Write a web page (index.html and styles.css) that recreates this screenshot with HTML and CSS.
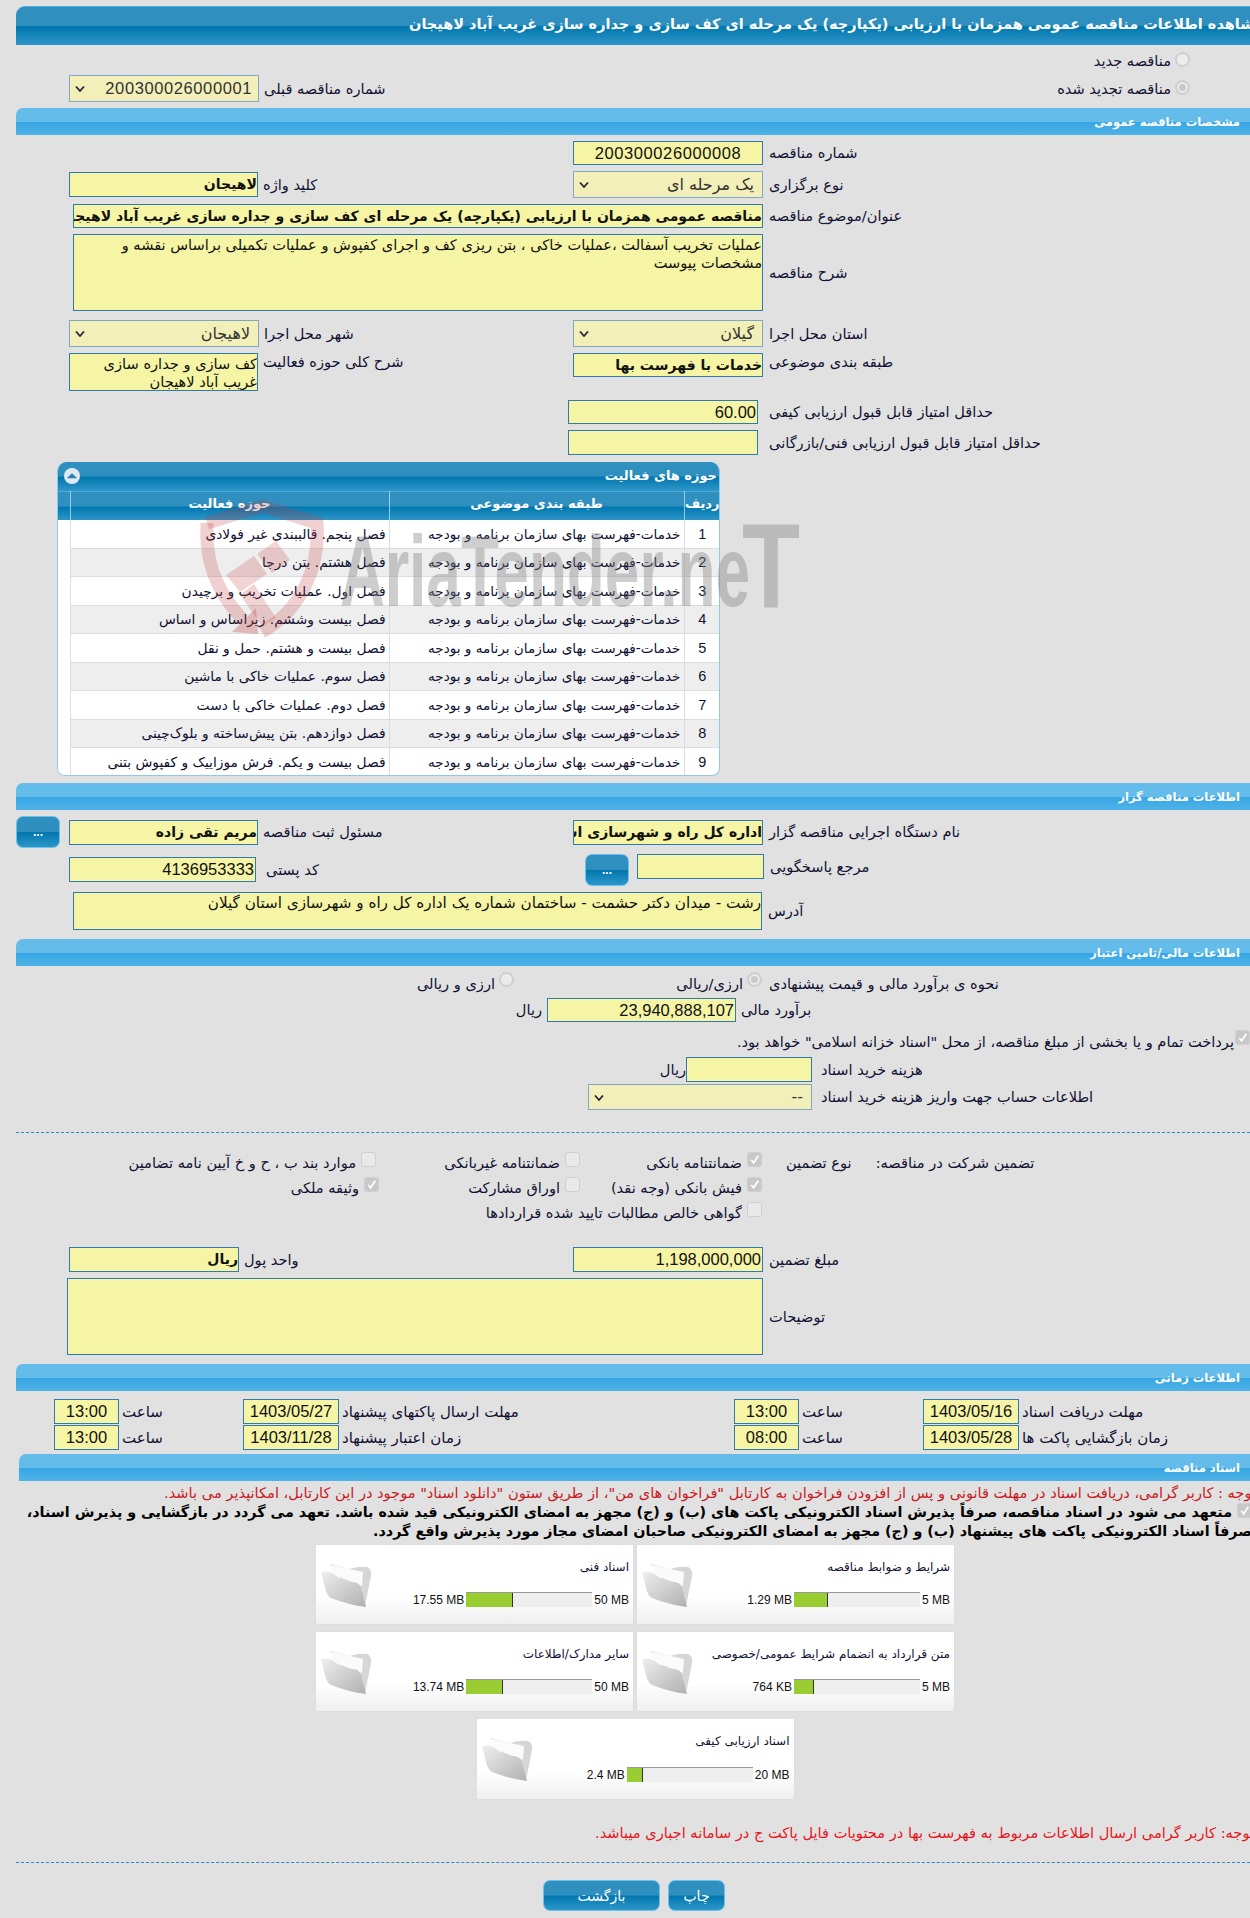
FILE: index.html
```
<!DOCTYPE html>
<html lang="fa">
<head>
<meta charset="utf-8">
<title>مشاهده اطلاعات مناقصه</title>
<link rel="stylesheet" href="styles.css">
</head>
<body>
<div class="page">
  <h1 class="title"><span>مشاهده اطلاعات مناقصه عمومی همزمان با ارزیابی (یکپارچه) یک مرحله ای کف سازی و جداره سازی غریب آباد لاهیجان</span></h1>

  <div class="flow-right r1"><span class="lab">مناقصه جدید</span><i class="radio"></i></div>
  <div class="row r2">
    <div class="f f5"><div class="sel w190 h27 long"><svg class="chev" viewBox="0 0 10 8"><path d="M1 1.500 5 6l4-4.500" fill="none" stroke="#223" stroke-width="1.800"/></svg>200300026000001</div><span class="lab">شماره مناقصه قبلی</span></div>
    <div class="flow-right rad2"><span class="lab">مناقصه تجدید شده</span><i class="radio on"></i></div>
  </div>

  <h2 class="sec g6">مشخصات مناقصه عمومی</h2>

  <div class="row g6"><div></div><div class="f"><div class="inp num w190 h24 ctr long">200300026000008</div><span class="lab">شماره مناقصه</span></div></div>
  <div class="row g6 h27">
    <div class="f f5"><div class="inp bold w189">لاهیجان</div><span class="lab">کلید واژه</span></div>
    <div class="f"><div class="sel w190 h27"><svg class="chev" viewBox="0 0 10 8"><path d="M1 1.500 5 6l4-4.500" fill="none" stroke="#223" stroke-width="1.800"/></svg>یک مرحله ای</div><span class="lab">نوع برگزاری</span></div>
  </div>
  <div class="wide g6"><div class="inp bold w690 h24">مناقصه عمومی همزمان با ارزیابی (یکپارچه) یک مرحله ای کف سازی و جداره سازی غریب آباد لاهیجان</div><span class="lab">عنوان/موضوع مناقصه</span></div>
  <div class="wide g6"><div class="area w690 h77">عملیات تخریب آسفالت ،عملیات خاکی ، بتن ریزی کف و اجرای کفپوش و عملیات تکمیلی براساس نقشه و مشخصات پیوست</div><span class="lab">شرح مناقصه</span></div>
  <div class="row g9 h27">
    <div class="f f5"><div class="sel w190 h27"><svg class="chev" viewBox="0 0 10 8"><path d="M1 1.500 5 6l4-4.500" fill="none" stroke="#223" stroke-width="1.800"/></svg>لاهیجان</div><span class="lab">شهر محل اجرا</span></div>
    <div class="f"><div class="sel w190 h27"><svg class="chev" viewBox="0 0 10 8"><path d="M1 1.500 5 6l4-4.500" fill="none" stroke="#223" stroke-width="1.800"/></svg>گیلان</div><span class="lab">استان محل اجرا</span></div>
  </div>
  <div class="row g6 top">
    <div class="f f5 ftop"><div class="area w189 h38">کف سازی و جداره سازی غریب آباد لاهیجان</div><span class="lab">شرح کلی حوزه فعالیت</span></div>
    <div class="f ftop"><div class="inp bold w190 h24">خدمات با فهرست بها</div><span class="lab">طبقه بندی موضوعی</span></div>
  </div>
  <div class="row g9"><div></div><div class="f f11 shift"><div class="inp num w190 h24">60.00</div><span class="lab">حداقل امتیاز قابل قبول ارزیابی کیفی</span></div></div>
  <div class="row g6"><div></div><div class="f f11 shift"><div class="inp w190 h25"></div><span class="lab">حداقل امتیاز قابل قبول ارزیابی فنی/بازرگانی</span></div></div>

  <div class="panel">
    <div class="panel-head"><i class="collapse"><svg viewBox="0 0 14 14"><path d="M2.500 9 7 4.500 11.500 9Z" fill="#2c7fb3"/></svg></i><span>حوزه های فعالیت</span></div>
    <table class="grid">
      <thead><tr><th class="c1">ردیف</th><th class="c2">طبقه بندی موضوعی</th><th class="c3">حوزه فعالیت</th><th class="c4"></th></tr></thead>
      <tbody>
        <tr><td class="n">1</td><td>خدمات-فهرست بهای سازمان برنامه و بودجه</td><td>فصل پنجم. قالببندی غیر فولادی</td><td></td></tr>
        <tr><td class="n">2</td><td>خدمات-فهرست بهای سازمان برنامه و بودجه</td><td>فصل هشتم. بتن درجا</td><td></td></tr>
        <tr><td class="n">3</td><td>خدمات-فهرست بهای سازمان برنامه و بودجه</td><td>فصل اول. عملیات تخریب و برچیدن</td><td></td></tr>
        <tr><td class="n">4</td><td>خدمات-فهرست بهای سازمان برنامه و بودجه</td><td>فصل بیست وششم. زیراساس و اساس</td><td></td></tr>
        <tr><td class="n">5</td><td>خدمات-فهرست بهای سازمان برنامه و بودجه</td><td>فصل بیست و هشتم. حمل و نقل</td><td></td></tr>
        <tr><td class="n">6</td><td>خدمات-فهرست بهای سازمان برنامه و بودجه</td><td>فصل سوم. عملیات خاکی با ماشین</td><td></td></tr>
        <tr><td class="n">7</td><td>خدمات-فهرست بهای سازمان برنامه و بودجه</td><td>فصل دوم. عملیات خاکی با دست</td><td></td></tr>
        <tr><td class="n">8</td><td>خدمات-فهرست بهای سازمان برنامه و بودجه</td><td>فصل دوازدهم. بتن پیش‌ساخته و بلوک‌چینی</td><td></td></tr>
        <tr><td class="n">9</td><td>خدمات-فهرست بهای سازمان برنامه و بودجه</td><td>فصل بیست و یکم. فرش موزاییک و کفپوش بتنی</td><td></td></tr>
      </tbody>
    </table>
  </div>

  <h2 class="sec g7">اطلاعات مناقصه گزار</h2>

  <div class="buy g6">
    <button class="btn-dots" type="button">...</button>
    <div class="row-inner">
      <div class="f f5"><div class="inp bold w189">مریم تقی زاده</div><span class="lab">مسئول ثبت مناقصه</span></div>
      <div class="f"><div class="inp bold w190">اداره کل راه و شهرسازی استان گیلان</div><span class="lab">نام دستگاه اجرایی مناقصه گزار</span></div>
    </div>
  </div>
  <div class="row g6 h32 ftop">
    <div class="f f10 pt3"><div class="inp num w187">4136953333</div><span class="lab">کد پستی</span></div>
    <div class="f ftop"><button class="btn-dots small" type="button">...</button><div class="inp w127"></div><span class="lab pt4">مرجع پاسخگویی</span></div>
  </div>
  <div class="wide g6"><div class="area addr w689 h38">رشت - میدان دکتر حشمت - ساختمان شماره یک اداره کل راه و شهرسازی استان گیلان</div><span class="lab">آدرس</span></div>

  <h2 class="sec g9">اطلاعات مالی/تامین اعتبار</h2>

  <div class="pay g6">
    <div class="pc"><span class="lab">ارزی و ریالی</span><i class="radio"></i></div>
    <div class="pc"><span class="lab">ارزی/ریالی</span><i class="radio on"></i></div>
    <span class="lab p7">نحوه ی برآورد مالی و قیمت پیشنهادی</span>
  </div>
  <div class="est g8"><span class="lab rial">ریال</span><div class="inp num w189 h24">23,940,888,107</div><span class="lab">برآورد مالی</span></div>
  <div class="flow-right notice g8"><span class="lab">پرداخت تمام و یا بخشی از مبلغ مناقصه، از محل "اسناد خزانه اسلامی" خواهد بود.</span><i class="check on"><svg viewBox="0 0 12 12"><path d="M3 6.500 5.200 9 9.500 2.500" fill="none" stroke="#fff" stroke-width="1.600"/></svg></i></div>
  <div class="cost g7"><span class="lab rial">ریال</span><div class="inp w126"></div><span class="lab gl9">هزینه خرید اسناد</span></div>
  <div class="acct g2"><div class="sel w224"><svg class="chev" viewBox="0 0 10 8"><path d="M1 1.500 5 6l4-4.500" fill="none" stroke="#223" stroke-width="1.800"/></svg>--</div><span class="lab gl9">اطلاعات حساب جهت واریز هزینه خرید اسناد</span></div>

  <div class="dash g22"></div>

  <div class="guar-wrap">
    <div class="guar">
      <label class="opt"><i class="check on"><svg viewBox="0 0 12 12"><path d="M3 6.500 5.200 9 9.500 2.500" fill="none" stroke="#fff" stroke-width="1.600"/></svg></i><span class="lab">ضمانتنامه بانکی</span></label>
      <label class="opt"><i class="check"></i><span class="lab">ضمانتنامه غیربانکی</span></label>
      <label class="opt"><i class="check"></i><span class="lab">موارد بند ب ، ح و خ آیین نامه تضامین</span></label>
      <label class="opt"><i class="check on"><svg viewBox="0 0 12 12"><path d="M3 6.500 5.200 9 9.500 2.500" fill="none" stroke="#fff" stroke-width="1.600"/></svg></i><span class="lab">فیش بانکی (وجه نقد)</span></label>
      <label class="opt"><i class="check"></i><span class="lab">اوراق مشارکت</span></label>
      <label class="opt nudge"><i class="check on"><svg viewBox="0 0 12 12"><path d="M3 6.500 5.200 9 9.500 2.500" fill="none" stroke="#fff" stroke-width="1.600"/></svg></i><span class="lab">وثیقه ملکی</span></label>
      <label class="opt span3"><i class="check"></i><span class="lab">گواهی خالص مطالبات تایید شده قراردادها</span></label>
    </div>
    <span class="lab">نوع تضمین</span>
    <span class="lab">تضمین شرکت در مناقصه:</span>
  </div>

  <div class="row g5">
    <div class="f f5"><div class="inp bold w170">ریال</div><span class="lab">واحد پول</span></div>
    <div class="f"><div class="inp num w190">1,198,000,000</div><span class="lab">مبلغ تضمین</span></div>
  </div>
  <div class="wide left67 g6"><div class="area w696 h77"></div><span class="lab">توضیحات</span></div>

  <h2 class="sec g9">اطلاعات زمانی</h2>

  <div class="times g8">
    <div class="tf"><div class="inp num w65 ctr">13:00</div><span class="lab">ساعت</span></div>
    <div class="tf"><div class="inp num w96 ctr">1403/05/27</div><span class="lab">مهلت ارسال پاکتهای پیشنهاد</span></div>
    <div class="tf"><div class="inp num w65 ctr">13:00</div><span class="lab">ساعت</span></div>
    <div class="tf"><div class="inp num w96 ctr">1403/05/16</div><span class="lab">مهلت دریافت اسناد</span></div>
    <div class="tf"><div class="inp num w65 ctr">13:00</div><span class="lab">ساعت</span></div>
    <div class="tf"><div class="inp num w96 ctr">1403/11/28</div><span class="lab">زمان اعتبار پیشنهاد</span></div>
    <div class="tf"><div class="inp num w65 ctr">08:00</div><span class="lab">ساعت</span></div>
    <div class="tf"><div class="inp num w96 ctr">1403/05/28</div><span class="lab">زمان بازگشایی پاکت ها</span></div>
  </div>

  <h2 class="sec sec-in g4">اسناد مناقصه</h2>

  <p class="warn warn1">توجه : کاربر گرامی، دریافت اسناد در مهلت قانونی و پس از افزودن فراخوان به کارتابل "فراخوان های من"، از طریق ستون "دانلود اسناد" موجود در این کارتابل، امکانپذیر می باشد.</p>
  <div class="pledge">
    <i class="check on"><svg viewBox="0 0 12 12"><path d="M3 6.500 5.200 9 9.500 2.500" fill="none" stroke="#fff" stroke-width="1.600"/></svg></i>
    <p>متعهد می شود در اسناد مناقصه، صرفاً پذیرش اسناد الکترونیکی پاکت های (ب) و (ج) مجهز به امضای الکترونیکی قید شده باشد. تعهد می گردد در بازگشایی و پذیرش اسناد،<br>صرفاً اسناد الکترونیکی پاکت های پیشنهاد (ب) و (ج) مجهز به امضای الکترونیکی صاحبان امضای مجاز مورد پذیرش واقع گردد.</p>
  </div>

  <div class="cards">
    <div class="card">
      <svg class="folder" viewBox="0 0 54 46"><use href="#fold"/></svg>
      <div class="card-body"><div class="card-t">اسناد فنی</div><div class="prog"><span>17.55 MB</span><div class="bar"><b style="width:37%"></b></div><span>50 MB</span></div></div>
    </div>
    <div class="card">
      <svg class="folder" viewBox="0 0 54 46"><use href="#fold"/></svg>
      <div class="card-body"><div class="card-t">شرایط و ضوابط مناقصه</div><div class="prog"><span>1.29 MB</span><div class="bar"><b style="width:27%"></b></div><span>5 MB</span></div></div>
    </div>
    <div class="card">
      <svg class="folder" viewBox="0 0 54 46"><use href="#fold"/></svg>
      <div class="card-body"><div class="card-t">سایر مدارک/اطلاعات</div><div class="prog"><span>13.74 MB</span><div class="bar"><b style="width:29%"></b></div><span>50 MB</span></div></div>
    </div>
    <div class="card">
      <svg class="folder" viewBox="0 0 54 46"><use href="#fold"/></svg>
      <div class="card-body"><div class="card-t">متن قرارداد به انضمام شرایط عمومی/خصوصی</div><div class="prog"><span>764 KB</span><div class="bar"><b style="width:16%"></b></div><span>5 MB</span></div></div>
    </div>
    <div class="card solo">
      <svg class="folder" viewBox="0 0 54 46"><use href="#fold"/></svg>
      <div class="card-body"><div class="card-t">اسناد ارزیابی کیفی</div><div class="prog"><span>2.4 MB</span><div class="bar"><b style="width:13%"></b></div><span>20 MB</span></div></div>
    </div>
  </div>

  <p class="warn warn2">توجه: کاربر گرامی ارسال اطلاعات مربوط به فهرست بها در محتویات فایل پاکت ج در سامانه اجباری میباشد.</p>
  <div class="dash g20"></div>
  <div class="actions">
    <button class="btn" type="button">بازگشت</button>
    <button class="btn print" type="button">چاپ</button>
  </div>

  <svg class="watermark" viewBox="0 0 1250 1918" aria-hidden="true">
    <path d="M207 523 262 506 317 523C320 570 300 610 262 632" fill="none" stroke="#c23a3a" stroke-opacity=".24" stroke-width="13"/>
    <path d="M207 523C205 560 215 590 243 620" fill="none" stroke="#c23a3a" stroke-opacity=".24" stroke-width="13"/>
    <path d="M226 575 254 556 267 574 240 592ZM257 554 276 541 290 560 272 573ZM240 595 262 626 276 618 254 584Z" fill="#c23a3a" fill-opacity=".22"/>
    <path d="M232 632 258 634 256 608Z" fill="#c23a3a" fill-opacity=".3"/>
    <text class="wm-text" x="340" y="606" textLength="410" lengthAdjust="spacingAndGlyphs">AriaTender.ne</text>
    <text class="wm-text wm-t" x="742" y="608" textLength="58" lengthAdjust="spacingAndGlyphs">T</text>
  </svg>

  <svg class="defs" aria-hidden="true">
    <defs>
      <linearGradient id="fg" x1="0" y1="0" x2="1" y2="1"><stop offset="0" stop-color="#efefef"/><stop offset="1" stop-color="#b0b0b0"/></linearGradient>
      <g id="fold">
        <path d="M11 2 30 7Q40 4 48 5 53 7 52 14L46 44 38 40Z" fill="#d6d6d6"/>
        <path d="M13 3 44 10 43 24 12 12Z" fill="#fbfbfb"/>
        <path d="M2 10Q10 8 16 13 24 20 34 20 40 20 42 26L47 45Q30 43 12 36 8 34 6 26Z" fill="url(#fg)"/>
      </g>
    </defs>
  </svg>
</div>
</body>
</html>
```
FILE: styles.css
```
* { box-sizing: border-box; }
html, body { margin: 0; padding: 0; background: #e1e1e1; }
body { font-family: "DejaVu Sans", sans-serif; font-size: 12px; color: #111133; }
.page { position: relative; width: 1250px; height: 1918px; overflow: hidden; padding: 6px 0 0 16px; }
h1, h2, p { margin: 0; font-weight: normal; }
i { font-style: normal; }

.title { height: 39px; width: 1250px; padding-top: 9px; border-radius: 9px 0 0 0; background: linear-gradient(#2f8fbf 0 48%, #0077ae 52%, #2f96c9 100%); border-top: 1px solid #49aee2; color: #fff; font-size: 14.500px; font-weight: bold; white-space: nowrap; direction: rtl; overflow: hidden; }
.title span { display: inline-block; margin-right: 2px; }

.sec { height: 27px; width: 1234px; line-height: 28px; padding-right: 10px; direction: rtl; border-radius: 7px 0 0 0; background: linear-gradient(#64bcea 0 50%, #37a6e3 52%, #4fb3e8 100%); color: #fff; font-size: 11.500px; font-weight: bold; }
.sec-in { margin-left: 3px; width: 1231px; }

.g2 { margin-top: 2px; } .g4 { margin-top: 4px; } .g5 { margin-top: 5px; } .g6 { margin-top: 6px; } .g7 { margin-top: 7px; } .g8 { margin-top: 8px; } .g9 { margin-top: 9px; } .g20 { margin-top: 20px; } .g22 { margin-top: 22px; }

.row { display: grid; grid-template-columns: 504px 1fr; padding-left: 53px; align-items: center; }
.row.top { align-items: start; height: 38px; }
.h27 { min-height: 27px; }
.h32 { min-height: 32px; }
.f { display: flex; align-items: center; gap: 6px; }
.f5 { gap: 5px; }
.f10 { gap: 10px; }
.f11 { gap: 11px; }
.shift { margin-left: -5px; }
.ftop { align-items: flex-start; }
.pt3 { padding-top: 3px; }
.pt4 { padding-top: 4px; }
.wide { display: flex; align-items: center; gap: 6px; padding-left: 57px; }
.left67 { padding-left: 51px; }
.flow-right { display: flex; justify-content: flex-end; align-items: center; gap: 4px; }
.r1 { height: 23px; margin-top: 7px; padding-right: 60px; width: 1234px; align-items: flex-start; }
.r2 { height: 27px; }
.rad2 { padding-right: 60px; align-items: flex-start; height: 27px; padding-top: 5px; }

.lab { direction: rtl; white-space: nowrap; font-size: 14.600px; line-height: 18px; }
.inp, .sel, .area { direction: rtl; border: 1px solid #2f7bab; background: #f6f5a5; color: #111; flex: none; }
.inp { height: 25px; line-height: 23px; font-size: 14px; white-space: nowrap; overflow: hidden; }
.sel { position: relative; height: 26px; line-height: 24px; border-color: #7fa9c3; background: #f2f0b8; padding-right: 8px; font-size: 16px; color: #333; }
.sel.h27 { height: 27px; line-height: 25px; }
.area { font-size: 14.600px; line-height: 18px; padding-top: 1px; overflow: hidden; }
.addr { font-size: 15.200px; }
.bold { font-weight: bold; }
.num { font-family: "Liberation Sans", sans-serif; font-size: 16.500px; line-height: 23px; padding-right: 1px; }
.ctr { text-align: center; direction: ltr; padding: 0; }
.long { letter-spacing: .6px; }
.chev { position: absolute; left: 5px; top: 9px; width: 10px; height: 8px; }
.w65 { width: 65px; } .w96 { width: 96px; } .w126 { width: 126px; } .w127 { width: 127px; } .w170 { width: 170px; } .w187 { width: 187px; } .w189 { width: 189px; } .w190 { width: 190px; } .w224 { width: 224px; } .w689 { width: 689px; } .w690 { width: 690px; } .w696 { width: 696px; }
.h24 { height: 24px; } .h25 { height: 25px; } .h38 { height: 38px; } .h77 { height: 77px; }

.r2 .sel { font-family: "Liberation Sans", sans-serif; font-size: 16.500px; padding-right: 6px; }

.radio { display: block; width: 15px; height: 15px; border-radius: 50%; background: #ececec; border: 2px solid #cfcfcf; flex: none; }
.radio.on { background: #c9c9c9; box-shadow: inset 0 0 0 2px #ececec; }
.check { display: block; width: 15px; height: 15px; border-radius: 3px; background: #e9e9e9; border: 1px solid #cfcfcf; flex: none; }
.check.on { background: #c8c8c8; }
.check svg { display: block; width: 13px; height: 13px; }

.panel { position: relative; width: 663px; height: 314px; margin: 7px 0 0 41px; border: 1px solid #8fc8ea; border-top: 0; border-radius: 9px 9px 8px 8px; overflow: hidden; background: #fff; }
.panel-head { display: flex; align-items: center; justify-content: space-between; height: 29px; padding: 0 2px 2px 6px; background: linear-gradient(#2f8fbf 0 48%, #0077ae 52%, #2f96c9 100%); color: #fff; font-weight: bold; font-size: 13px; direction: ltr; }
.collapse { display: block; width: 16px; height: 16px; border-radius: 50%; background: #dfe9f5; }
.collapse svg { display: block; width: 16px; height: 16px; }
.grid { width: 662px; border-collapse: collapse; table-layout: fixed; direction: rtl; }
.grid th { height: 28px; padding: 0 0 4px; background: linear-gradient(#2f8fbf 0 48%, #0077ae 52%, #2f96c9 100%); border-left: 1px solid #8fd0f2; border-top: 1px solid #51a8d8; color: #fff; font-size: 13px; font-weight: bold; }
.grid .c1 { width: 36px; } .grid .c2 { width: 295px; } .grid .c3 { width: 319px; } .grid .c4 { width: 12px; border-left: 0; }
.grid td { height: 28.500px; padding: 0 3px 0 0; border-left: 1px solid #ddd; border-bottom: 1px solid #ddd; font-size: 13.800px; white-space: nowrap; overflow: hidden; }
.grid td:nth-child(2) { font-size: 13.600px; }
.grid td.n { text-align: center; font-family: "Liberation Sans", sans-serif; font-size: 14.500px; padding: 0; }
.grid tr:nth-child(even) td { background: #eee; }
.grid td:last-child { background: #fff !important; border-left: 0; border-bottom: 0; padding: 0; }

.buy { display: flex; align-items: center; height: 32px; }
.row-inner { display: grid; grid-template-columns: 504px 1fr; flex: 1; padding-left: 9px; align-items: center; }
.btn-dots { flex: none; width: 44px; height: 32px; padding: 0; border: 1px solid #69c3ee; border-radius: 7px; background: linear-gradient(#2f8fbf 0 48%, #0077ae 52%, #2f96c9 100%); color: #fff; font: bold 12px "Liberation Sans", sans-serif; }
.small { margin-left: 12px; margin-right: 2px; }

.pay { display: grid; grid-template-columns: 498px 248px 1fr; height: 18px; }
.pc { display: flex; justify-content: flex-end; align-items: flex-start; gap: 4px; }
.p7 { justify-self: start; margin-left: 7px; }
.pay .lab { padding-top: 3px; }
.rial { flex: none; width: 24px; }
.est { display: flex; align-items: center; gap: 5px; padding-left: 502px; }
.notice { height: 20px; width: 1234px; gap: 1px; align-items: flex-start; }
.notice .lab { padding-top: 3px; }
.cost { display: flex; align-items: center; padding-left: 646px; }
.acct { display: flex; align-items: center; padding-left: 572px; }
.gl9 { margin-left: 9px; }

.dash { width: 1234px; height: 0; border-top: 1px dashed #2f88c0; }

.guar-wrap { display: flex; align-items: flex-start; gap: 24px; height: 90px; margin-top: 19px; padding-left: 120px; }
.guar { display: grid; direction: rtl; grid-template-columns: 182px 204px 240px; grid-auto-rows: 25px; width: 626px; flex: none; }
.opt { display: flex; gap: 5px; align-items: flex-start; }
.nudge { margin-right: -3px; }
.span3 { grid-column: 1 / -1; }
.guar-wrap > .lab { padding-top: 2px; }
.guar .lab { padding-top: 2px; }

.times { display: grid; grid-template-columns: 189px 491px 189px 1fr; grid-auto-rows: 25px; gap: 1px 0; padding-left: 38px; }
.tf { display: flex; align-items: center; gap: 3px; }
.tf .lab { font-size: 15px; }

.warn { color: #c8191f; direction: rtl; white-space: nowrap; }
.warn1 { width: 1240px; margin: 4px 0 0 0; font-size: 14.600px; line-height: 16px; }
.pledge { position: relative; direction: rtl; margin: 2px 0 0 0; width: 1236px; height: 42px; }
.pledge .check { position: absolute; right: 0; top: 0; }
.pledge p { font-weight: bold; font-size: 14.300px; line-height: 19px; text-indent: 20px; color: #000; white-space: nowrap; }

.cards { display: grid; grid-template-columns: 317px 317px; gap: 8px 4px; justify-content: start; margin: 0 0 0 300px; }
.card { display: flex; height: 79px; background: linear-gradient(#fff 65%, #efefef); box-shadow: 0 0 1px #ccc; padding: 0 4px 0 3px; }
.solo { grid-column: 1 / -1; justify-self: center; width: 317px; height: 80px; }
.folder { flex: none; width: 54px; height: 46px; margin-top: 17px; filter: blur(.4px); }
.card-body { flex: 1; display: flex; flex-direction: column; justify-content: space-between; padding: 14px 0 17px; min-width: 0; }
.card-t { direction: rtl; font-size: 12px; line-height: 16px; }
.prog { display: flex; justify-content: flex-end; align-items: center; gap: 2px; font: 12px "Liberation Sans", sans-serif; color: #111; }
.bar { width: 126px; height: 15px; background: #eee; border-top: 1px solid #999; }
.bar b { display: block; height: 14px; background: #9acd32; border-right: 1px solid #333; }

.warn2 { color: #e8141c; font-size: 14.600px; line-height: 18px; width: 1238px; margin-top: 25px; }
.actions { display: flex; gap: 8px; padding-left: 527px; margin-top: 17px; }
.btn { width: 117px; height: 31px; border: 1px solid #69c3ee; border-radius: 7px; background: linear-gradient(#2f8fbf 0 48%, #0077ae 52%, #2f96c9 100%); color: #fff; font: 14px "DejaVu Sans", sans-serif; }
.print { width: 57px; }

.watermark { position: absolute; left: 0; top: 0; width: 1250px; height: 1918px; pointer-events: none; }
.wm-text { font: bold 100px "Liberation Sans", sans-serif; fill: #7f7f7f; fill-opacity: .38; }
.wm-t { font-size: 120px; }
.defs { position: absolute; width: 0; height: 0; }
```
